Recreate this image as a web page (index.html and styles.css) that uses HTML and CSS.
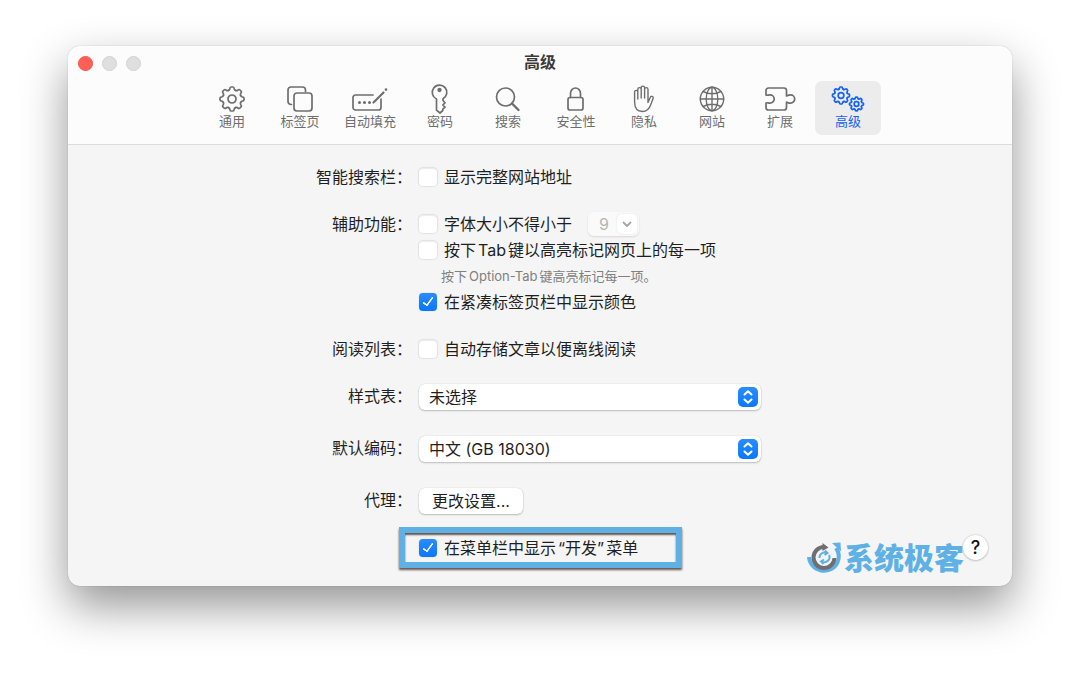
FILE: index.html
```html
<!DOCTYPE html>
<html lang="zh-CN">
<head>
	<meta charset="utf-8">
	<title>高级</title>
	<link rel="stylesheet" href="styles.css">
</head>
<body>
	<!--公用图形-->
	<svg class="defs" width="0" height="0" aria-hidden="true">
		<defs>
			<path id="tooth" vector-effect="non-scaling-stroke" d="M-3.6-8.6Q-2.4-9-2.2-10.2Q-2-12-1.1-12H1.1Q2-12 2.2-10.2Q2.4-9 3.6-8.6"/>
			<g id="gear">
				<use href="#tooth"/>
				<use href="#tooth" transform="rotate(45)"/>
				<use href="#tooth" transform="rotate(90)"/>
				<use href="#tooth" transform="rotate(135)"/>
				<use href="#tooth" transform="rotate(180)"/>
				<use href="#tooth" transform="rotate(225)"/>
				<use href="#tooth" transform="rotate(270)"/>
				<use href="#tooth" transform="rotate(315)"/>
				<circle r="4" vector-effect="non-scaling-stroke"/>
			</g>
		</defs>
	</svg>

	<div class="window">
		<header class="header">
			<div class="titlebar">
				<div class="lights">
					<span class="light close"></span>
					<span class="light"></span>
					<span class="light"></span>
				</div>
				<h1 class="title">高级</h1>
			</div>
			<!--工具栏-->
			<nav class="toolbar">
				<button class="tab" type="button">
					<svg class="icon" viewBox="-18 -14 36 28"><use href="#gear"/></svg>
					<span>通用</span>
				</button>
				<button class="tab" type="button">
					<svg class="icon" viewBox="0 0 36 28">
						<path d="M9.500 19.500H9a3 3 0 0 1-3-3V5a3 3 0 0 1 3-3h11.500a3 3 0 0 1 3 3v1.500"/>
						<rect x="12" y="8" width="18" height="18" rx="3"/>
					</svg>
					<span>标签页</span>
				</button>
				<button class="tab tab-wide" type="button">
					<svg class="icon" viewBox="0 0 36 28">
						<path d="M21 10H3.500A2.500 2.500 0 0 0 1 12.500v10A2.500 2.500 0 0 0 3.500 25h23a2.500 2.500 0 0 0 2.500-2.500V14"/>
						<path d="M21.500 17.500L31.500 7.500" stroke-width="2.200"/>
						<path d="M34 4.500v.1" stroke-width="2.600"/>
						<path d="M7.500 17.500v.1M12.500 17.500v.1M17.500 17.500v.1" stroke-width="3"/>
					</svg>
					<span>自动填充</span>
				</button>
				<button class="tab" type="button">
					<svg class="icon" viewBox="0 0 36 28">
						<path d="M14.500 14a7.300 7.300 0 1 1 6.500-.2v1.700l2 2.300-2.200 2.200 2.200 2.200-2.200 2v1.300L18 28l-3.500-2.800z"/>
						<circle cx="17.500" cy="5" r="1.300" class="fill"/>
					</svg>
					<span>密码</span>
				</button>
				<button class="tab" type="button">
					<svg class="icon" viewBox="0 0 36 28">
						<circle cx="15.500" cy="12" r="9"/>
						<path d="M22 18.500l6.500 6.500" stroke-width="2.400"/>
					</svg>
					<span>搜索</span>
				</button>
				<button class="tab" type="button">
					<svg class="icon" viewBox="0 0 36 28">
						<rect x="10" y="12.500" width="15" height="12.500" rx="2"/>
						<path d="M12.500 12.500V8.500a5 5.500 0 0 1 10 0v4"/>
					</svg>
					<span>安全性</span>
				</button>
				<button class="tab" type="button">
					<svg class="icon thin" viewBox="0 0 36 28">
						<path d="M8.600 17V7a1.500 1.500 0 0 1 3.200 0v7M11.800 13V4.300a1.600 1.600 0 0 1 3.400 0V13M15.200 12.500V2.800a1.600 1.600 0 0 1 3.400 0V13M18.600 12.500V4.300a1.600 1.600 0 0 1 3.400 0v13.200l2.300-5.200a1.500 1.500 0 0 1 2.800 1.100L24.600 20c-1.600 4.500-4 6.500-8 6.500-5 0-8-3.500-8-9.500"/>
					</svg>
					<span>隐私</span>
				</button>
				<button class="tab" type="button">
					<svg class="icon thin" viewBox="0 0 36 28">
						<circle cx="18" cy="14" r="11.700"/>
						<ellipse cx="18" cy="14" rx="5.800" ry="11.700"/>
						<path d="M18 2.300v23.400M6.300 14h23.400M9 6.500q9 4.500 18 0M9 21.500q9-4.500 18 0"/>
					</svg>
					<span>网站</span>
				</button>
				<button class="tab" type="button">
					<svg class="icon" viewBox="0 0 36 28">
						<path d="M4 10V5.500A2.500 2.500 0 0 1 6.500 3H22a2.500 2.500 0 0 1 2.500 2.500V11c1 0 1.500-1.200 4-1.200a4.200 4.200 0 0 1 0 8.400c-2.500 0-3-1.200-4-1.200v5.500A2.500 2.500 0 0 1 22 25H6.500A2.500 2.500 0 0 1 4 22.500V18c1.500-.8 2 .2 4 .2a4.200 4.200 0 0 0 0-8.400c-2 0-2.500 1-4 .2z"/>
					</svg>
					<span>扩展</span>
				</button>
				<button class="tab tab-active" type="button">
					<svg class="icon" viewBox="0 0 36 28">
						<use href="#gear" transform="translate(11 10.500) scale(.71)"/>
						<use href="#gear" transform="translate(26.500 19) scale(.58)"/>
					</svg>
					<span>高级</span>
				</button>
			</nav>
		</header>

		<!--设置表单-->
		<form class="form">
			<div class="row">
				<div class="name">智能搜索栏：</div>
				<label class="check"><input type="checkbox">显示完整网站地址</label>
			</div>
			<div class="row">
				<div class="name">辅助功能：</div>
				<div class="group">
					<div class="line">
						<label class="check"><input type="checkbox">字体大小不得小于</label>
						<span class="combo">
							<select aria-label="最小字体大小" disabled>
								<option>9</option>
							</select>
							<svg class="combo-arrow" viewBox="0 0 20 20"><path d="M6.500 8.500l3.500 3.500 3.500-3.500"/></svg>
						</span>
					</div>
					<label class="check"><input type="checkbox"><span>按下<span class="latin">Tab</span>键以高亮标记网页上的每一项</span></label>
					<p class="note">按下<span class="latin">Option-Tab</span>键高亮标记每一项。</p>
					<label class="check"><input type="checkbox" checked>在紧凑标签页栏中显示颜色</label>
				</div>
			</div>
			<div class="row">
				<div class="name">阅读列表：</div>
				<label class="check"><input type="checkbox">自动存储文章以便离线阅读</label>
			</div>
			<div class="row">
				<label class="name" for="sheet">样式表：</label>
				<div class="popup">
					<select id="sheet">
						<option>未选择</option>
					</select>
					<svg class="popup-arrow" viewBox="0 0 20 20"><path d="M6.500 7.500L10 4.200l3.500 3.300M6.500 12.500l3.500 3.300 3.500-3.300"/></svg>
				</div>
			</div>
			<div class="row row-tall">
				<label class="name" for="encoding">默认编码：</label>
				<div class="popup">
					<select id="encoding">
						<option>中文 (GB 18030)</option>
					</select>
					<svg class="popup-arrow" viewBox="0 0 20 20"><path d="M6.500 7.500L10 4.200l3.500 3.300M6.500 12.500l3.500 3.300 3.500-3.300"/></svg>
				</div>
			</div>
			<div class="row row-tall">
				<div class="name">代理：</div>
				<button class="push" type="button">更改设置...</button>
			</div>
			<div class="row row-last">
				<div class="bottom">
					<label class="check highlight"><input type="checkbox" checked><span>在菜单栏中显示<span class="latin">“开发”</span>菜单</span></label>
					<button class="help" type="button">?</button>
				</div>
			</div>
		</form>

		<!--水印-->
		<div class="brand">
			<svg class="brand-logo" viewBox="0 0 38 34">
				<path class="blue" d="M3 16a15 14.500 0 0 0 28.500 5.500a15 15 0 0 0-1.500-14.500"/>
				<path class="blue-fill" d="M26 2l8.500-.5.500 9z"/>
				<path class="gray" d="M18 6A10.500 10.500 0 1 0 28.500 17"/>
				<path class="gray-fill" d="M16.500 2l6 4.500-6 3.500z"/>
				<path class="blue-thin" d="M13.500 17a5 5 0 0 1 7-5M23 14a5 5 0 0 1-7 6.500M19 9.500l2.500 2.500-3 2M17.500 23L15 20.500l3-2"/>
			</svg>
			<span class="brand-name">系统极客</span>
		</div>
	</div>
</body>
</html>
```
FILE: styles.css
```css
* {
	margin: 0;
	padding: 0;
	box-sizing: border-box;
}

body {
	min-height: 100vh;
	padding: 46px 68px;
	background: #fff;
	font-family: Inter, "Noto Sans CJK SC", sans-serif;
	font-size: 16px;
	line-height: 24px;
	color: #1f1f1f;
}

button, select, input {
	font: inherit;
	color: inherit;
	border: none;
}

.defs {
	position: absolute;
}

.window {
	position: relative;
	border-radius: 12px;
	background: #f5f5f5;
	box-shadow: 0 0 1px rgba(0,0,0,0.4), 0 20px 46px rgba(0,0,0,0.42);
}

/* 标题栏 */
.header {
	padding-bottom: 9px;
	border-bottom: 1px solid #dcdcdc;
	border-radius: 12px 12px 0 0;
	background: #fcfcfc;
}

.titlebar {
	display: grid;
	grid-template-columns: 1fr auto 1fr;
	align-items: center;
	height: 35px;
	padding: 0 10px;
}

.lights {
	display: flex;
	gap: 9px;
}

.light {
	width: 15px;
	height: 15px;
	border: 1px solid #d2d2d2;
	border-radius: 50%;
	background: #dfdfdf;
}

.close {
	border-color: #f0544b;
	background: #ff5f57;
}

.title {
	padding-bottom: 3px;
	font-size: 16px;
	font-weight: 600;
	color: #3a3a3a;
}

/* 工具栏 */
.toolbar {
	display: flex;
	justify-content: center;
	gap: 2px;
}

.tab {
	display: flex;
	flex-direction: column;
	align-items: center;
	width: 66px;
	padding: 4px 0 6px;
	border-radius: 7px;
	background: none;
	font-size: 13px;
	line-height: 16px;
	color: #6e6e6e;
}

.tab-wide {
	width: 70px;
}

.tab-active {
	background: #ececec;
	color: #1463f3;
}

.icon {
	width: 36px;
	height: 28px;
	overflow: visible;
	fill: none;
	stroke: currentColor;
	stroke-width: 1.7;
	stroke-linecap: round;
	stroke-linejoin: round;
}

.thin {
	stroke-width: 1.4;
}

.icon .fill {
	fill: currentColor;
}

/* 表单 */
.form {
	display: flex;
	flex-direction: column;
	gap: 23px;
	padding: 20px 24px 18px 0;
}

.row {
	display: grid;
	grid-template-columns: 344fr 569fr;
	column-gap: 7px;
	align-items: center;
}

.row-tall {
	margin-top: 3px;
}

.row-last {
	margin-top: -10px;
}

.name {
	align-self: start;
	text-align: right;
}

.check {
	display: flex;
	align-items: center;
	gap: 7px;
}

.check input {
	position: relative;
	width: 18px;
	height: 18px;
	appearance: none;
	border-radius: 4px;
	background: #fff;
	box-shadow: 0 0 1px 1px rgba(0,0,0,0.08), inset 0 1px 1px rgba(0,0,0,0.08);
}

.check input:checked {
	background: linear-gradient(#2a8cff, #0a78f8);
	box-shadow: 0 0 1px rgba(0,60,160,0.4);
}

.check input:checked::after {
	content: "";
	position: absolute;
	left: 6px;
	top: 2px;
	width: 4px;
	height: 9px;
	border: solid #fff;
	border-width: 0 2px 2px 0;
	border-radius: 1px;
	transform: rotate(36deg);
}

.group {
	display: flex;
	flex-direction: column;
	gap: 2px;
}

.line {
	display: flex;
	gap: 16px;
}

.latin {
	margin: 0 2px;
}

.note {
	padding-left: 22px;
	font-size: 13px;
	color: #808080;
}

.combo {
	position: relative;
}

.combo select {
	display: block;
	width: 51px;
	height: 24px;
	padding-left: 11px;
	appearance: none;
	border-radius: 6px;
	background: #fafafa;
	box-shadow: 0 1px 2px rgba(0,0,0,0.12);
	color: #b5b5b5;
	opacity: 1;
}

.combo-arrow {
	position: absolute;
	top: 2px;
	right: 2px;
	width: 20px;
	height: 20px;
	border-radius: 5px;
	background: #fff;
	box-shadow: 0 0 2px rgba(0,0,0,0.12);
	fill: none;
	stroke: #a6a6a6;
	stroke-width: 1.8;
	stroke-linecap: round;
	stroke-linejoin: round;
}

.popup {
	position: relative;
	width: 342px;
}

.popup select {
	display: block;
	width: 100%;
	height: 26px;
	padding-left: 10px;
	appearance: none;
	border-radius: 6px;
	background: #fff;
	box-shadow: 0 0 1px rgba(0,0,0,0.2), 0 1px 2px rgba(0,0,0,0.22);
}

.popup-arrow {
	position: absolute;
	top: 3px;
	right: 3px;
	width: 20px;
	height: 20px;
	border-radius: 5px;
	background: linear-gradient(#2a8cff, #0a78f8);
	fill: none;
	stroke: #fff;
	stroke-width: 2;
	stroke-linecap: round;
	stroke-linejoin: round;
	pointer-events: none;
}

.push {
	justify-self: start;
	width: 104px;
	height: 26px;
	border-radius: 6px;
	background: #fff;
	box-shadow: 0 0 1px rgba(0,0,0,0.2), 0 1px 2px rgba(0,0,0,0.22);
}

.bottom {
	grid-column: 2;
	display: flex;
	align-items: center;
	justify-content: space-between;
	margin-left: -20px;
}

.highlight {
	width: 283px;
	height: 41px;
	padding-left: 14px;
	border: 6px solid #5fb1e5;
	box-shadow: 0 2px 2px #66564c, inset 0 2px 2px #66564c;
}

.help {
	width: 25px;
	height: 25px;
	border-radius: 50%;
	background: #fff;
	box-shadow: 0 0 2px rgba(0,0,0,0.25), 0 1px 2px rgba(0,0,0,0.15);
	font-size: 18px;
	font-weight: 500;
	color: #111;
}

/* 水印 */
.brand {
	position: absolute;
	right: 48px;
	bottom: 11px;
	display: flex;
	align-items: center;
	pointer-events: none;
}

.brand-logo {
	width: 38px;
	height: 34px;
	fill: none;
}

.brand-name {
	font-size: 30px;
	line-height: 34px;
	font-weight: 900;
	color: #5fb1e5;
}

.blue {
	stroke: #5fb1e5;
	stroke-width: 4;
}

.blue-fill {
	fill: #5fb1e5;
}

.gray {
	stroke: #6f6f73;
	stroke-width: 4;
}

.gray-fill {
	fill: #6f6f73;
}

.blue-thin {
	stroke: #5fb1e5;
	stroke-width: 2;
}
```
